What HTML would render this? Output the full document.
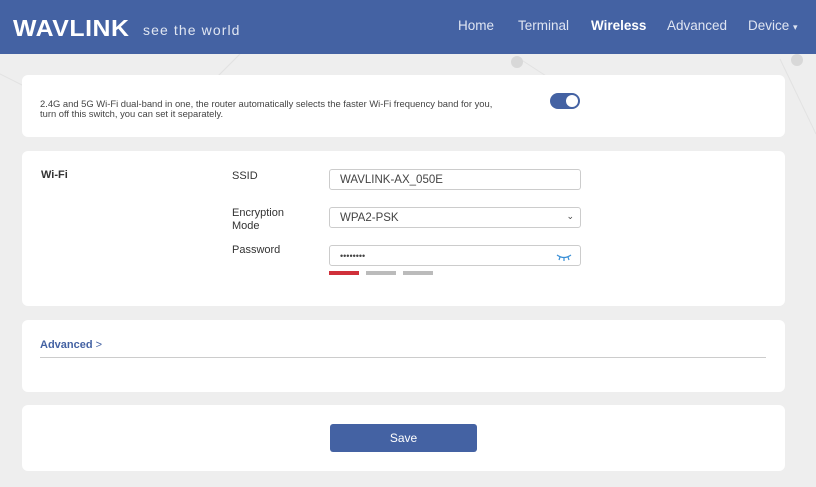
<!DOCTYPE html>
<html><head><meta charset="utf-8"><style>
*{box-sizing:border-box;margin:0;padding:0}
body{width:816px;height:487px;overflow:hidden;background:#eeeeee;font-family:"Liberation Sans",sans-serif;color:#333;position:relative}
.hdr{position:absolute;left:0;top:0;width:816px;height:54px;background:#4462a3}
.logo{position:absolute;left:13px;top:15px;color:#fff;font-weight:bold;font-size:23px;letter-spacing:0.5px;transform:scaleX(1.08);transform-origin:left}
.tag{position:absolute;left:143px;top:22px;color:#e0e6f2;font-size:14px;letter-spacing:1.1px}
.nav{position:absolute;top:18px;font-size:13.5px;color:#dfe5f2}
.card{position:absolute;left:22px;width:763px;background:#fff;border-radius:6px}
.lbl{position:absolute;font-size:11px;color:#333}
.inp{position:absolute;left:329px;width:252px;height:21px;border:1px solid #ccc;border-radius:3px;font-size:11.5px;padding:4px 10px;color:#444}
.bar{position:absolute;top:271px;height:4px;width:30px;background:#bbb}
</style></head><body>
<svg style="position:absolute;left:0;top:54px" width="816" height="433"><g stroke="#e2e2e2" fill="none"><line x1="0" y1="20" x2="120" y2="80"/><line x1="240" y1="0" x2="180" y2="60"/><line x1="520" y1="5" x2="620" y2="70"/><line x1="780" y1="5" x2="816" y2="80"/></g><g fill="#d8d8d8"><circle cx="517" cy="8" r="6"/><circle cx="797" cy="6" r="6"/></g></svg>
<div class="hdr">
<div class="logo">WAVLINK</div><div class="tag">see the world</div>
<div class="nav" style="left:458px">Home</div>
<div class="nav" style="left:518px">Terminal</div>
<div class="nav" style="left:591px;color:#fff;font-weight:bold">Wireless</div>
<div class="nav" style="left:667px">Advanced</div>
<div class="nav" style="left:748px">Device <span style="font-size:9px">▾</span></div>
</div>
<div class="card" style="top:75px;height:62px">
<div style="position:absolute;left:18px;top:24px;font-size:9.4px;line-height:10px;color:#444">2.4G and 5G Wi-Fi dual-band in one, the router automatically selects the faster Wi-Fi frequency band for you,<br>turn off this switch, you can set it separately.</div>
<div style="position:absolute;left:528px;top:18px;width:30px;height:16px;border-radius:8px;background:#4462a3"><div style="position:absolute;right:2px;top:2px;width:12px;height:12px;border-radius:50%;background:#fff"></div></div>
</div>
<div class="card" style="top:151px;height:155px"></div>
<div class="lbl" style="left:41px;top:169px;font-weight:bold">Wi-Fi</div>
<div class="lbl" style="left:232px;top:170px">SSID</div>
<div class="lbl" style="left:232px;top:207px;line-height:13px">Encryption<br>Mode</div>
<div class="lbl" style="left:232px;top:244px">Password</div>
<div class="inp" style="top:169px">WAVLINK-AX_050E</div>
<div class="inp" style="top:207px">WPA2-PSK<span style="position:absolute;right:6px;top:3px;font-size:9px">⌄</span></div>
<div class="inp" style="top:245px;font-size:9px;padding-top:5px">••••••••<svg style="position:absolute;right:8px;top:7px" width="16" height="8"><path d="M1 2Q8 7 15 2M4 4L3 7M8 5V8M12 4L13 7" stroke="#3a8fd6" fill="none" stroke-width="1.2"/></svg></div>
<div class="bar" style="left:329px;background:#d0303a"></div>
<div class="bar" style="left:366px"></div>
<div class="bar" style="left:403px"></div>
<div class="card" style="top:320px;height:72px">
<div style="position:absolute;left:18px;top:19px;font-size:11px;font-weight:bold;color:#4462a3">Advanced <span style="font-weight:normal">&gt;</span></div>
<div style="position:absolute;left:18px;top:37px;width:726px;height:1px;background:#ccc"></div>
</div>
<div class="card" style="top:405px;height:66px">
<div style="position:absolute;left:308px;top:19px;width:147px;height:28px;background:#4462a3;border-radius:3px;color:#fff;font-size:12px;text-align:center;line-height:28px">Save</div>
</div>
</body></html>
